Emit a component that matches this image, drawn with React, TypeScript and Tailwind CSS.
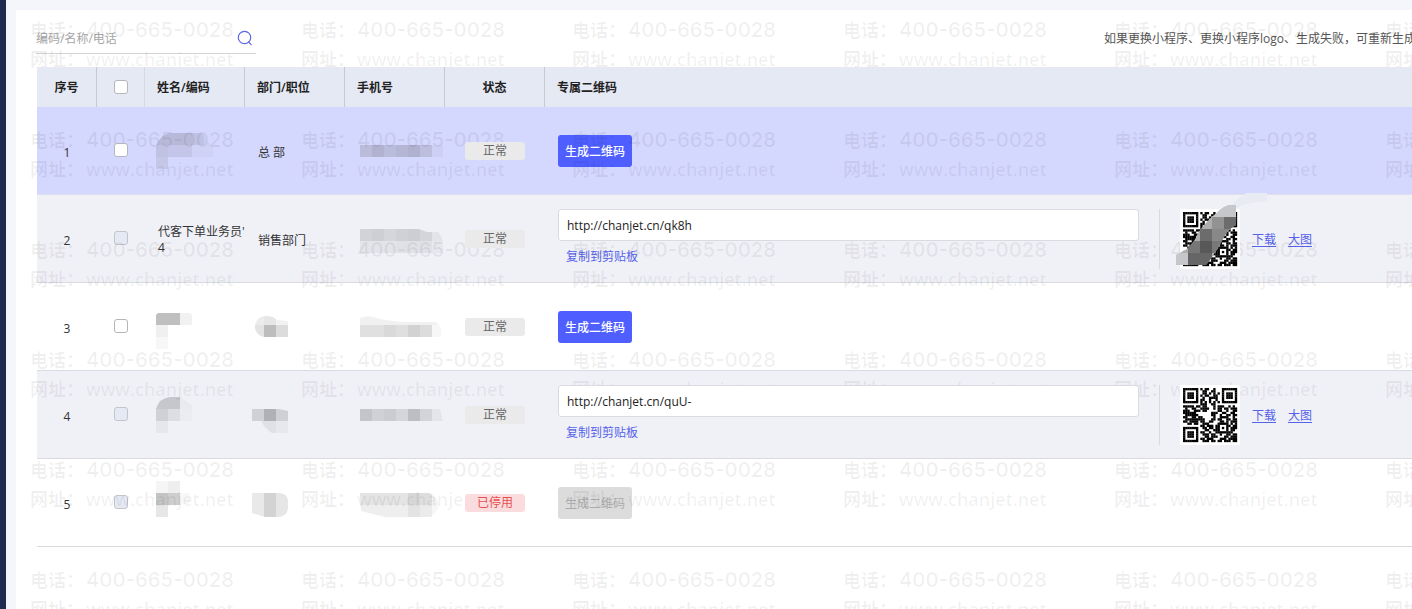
import type { ReactNode } from "react";

type Block = [x: number, y: number, w: number, h: number, fill: string];

type Row = {
  id: number;
  bg: string;
  line: string;
  locked?: boolean;
  name: ReactNode;
  dept: ReactNode;
  phone: ReactNode;
  active: boolean;
  url?: string;
  masked?: boolean;
};

// Pixelated cover for private data, drawn in the cell's own coordinates
function Mosaic({ id, shape, blocks }: { id: string; shape: string; blocks: Block[] }) {
  return (
    <svg width="100" height="87" viewBox="0 0 100 87" className="block" aria-hidden="true">
      <clipPath id={id}>
        <path d={shape} />
      </clipPath>
      <g clipPath={`url(#${id})`} shapeRendering="crispEdges">
        {blocks.map(([x, y, w, h, fill]) => (
          <rect key={`${x}-${y}`} x={x} y={y} width={w} height={h} fill={fill} />
        ))}
      </g>
    </svg>
  );
}

const rows: Row[] = [
  {
    id: 1,
    bg: "bg-[#d4d7fe]",
    line: "border-[#dddfee]",
    name: (
      <Mosaic
        id="n1"
        shape="M11 62V40Q15 27 26 26H56Q61 28 62 34L68 40V50H23V62Z"
        blocks={[
          [11, 26, 36, 12, "#b7b9d9"],
          [47, 26, 12, 12, "#c0c2e4"],
          [59, 26, 12, 12, "#cdd0f5"],
          [11, 38, 12, 12, "#c0c2e3"],
          [23, 38, 24, 12, "#c4c6e9"],
          [47, 38, 21, 12, "#cfd1f7"],
          [11, 50, 12, 12, "#c5c7e9"],
        ]}
      />
    ),
    dept: "总 部",
    phone: (
      <Mosaic
        id="p1"
        shape="M15 38H98V50H15Z"
        blocks={[
          [15, 38, 12, 12, "#babcd9"],
          [27, 38, 12, 12, "#b0b2cf"],
          [39, 38, 12, 12, "#babcdc"],
          [51, 38, 12, 12, "#b4b6d5"],
          [63, 38, 12, 12, "#afb1cf"],
          [75, 38, 12, 12, "#bcbede"],
          [87, 38, 11, 12, "#cdcff4"],
        ]}
      />
    ),
    active: true,
  },
  {
    id: 2,
    bg: "bg-[#f0f1f7]",
    line: "border-[#d9dadf]",
    locked: true,
    name: (
      <>
        代客下单业务员'
        <br />4
      </>
    ),
    dept: "销售部门",
    phone: (
      <Mosaic
        id="p2"
        shape="M15 34H74L82 37H93Q99 42 98 58H15Z"
        blocks={[
          [15, 34, 12, 12, "#d2d3d9"],
          [27, 34, 12, 12, "#cecfd5"],
          [39, 34, 12, 12, "#d5d6dc"],
          [51, 34, 12, 12, "#d0d1d7"],
          [63, 34, 12, 12, "#cdced4"],
          [75, 34, 12, 12, "#d4d5db"],
          [87, 34, 12, 12, "#e3e4ea"],
          [15, 46, 36, 12, "#e3e4ea"],
          [51, 46, 36, 12, "#e0e1e7"],
          [87, 46, 12, 12, "#e7e8ee"],
        ]}
      />
    ),
    active: true,
    url: "http://chanjet.cn/qk8h",
    masked: true,
  },
  {
    id: 3,
    bg: "bg-white",
    line: "border-[#d9dadf]",
    name: (
      <Mosaic
        id="n3"
        shape="M13 30H45L47 32V42H23V66H11V32Z"
        blocks={[
          [11, 30, 24, 12, "#bfbfbf"],
          [35, 30, 12, 12, "#f1f1f1"],
          [11, 42, 12, 12, "#f0f0f0"],
          [11, 54, 12, 12, "#f7f7f7"],
        ]}
      />
    ),
    dept: (
      <Mosaic
        id="d3"
        shape="M10 42Q12 33 21 33Q28 33 32 37L43 38V54H19Q11 52 10 45Z"
        blocks={[
          [7, 30, 12, 12, "#ececec"],
          [19, 30, 12, 12, "#e6e6e6"],
          [31, 30, 12, 12, "#f2f2f2"],
          [7, 42, 12, 12, "#e3e3e3"],
          [19, 42, 12, 12, "#bdbdbd"],
          [31, 42, 12, 12, "#dcdcdc"],
        ]}
      />
    ),
    phone: (
      <Mosaic
        id="p3"
        shape="M15 35Q25 31 34 36L56 39H90Q94 41 96 46V54H15Z"
        blocks={[
          [15, 30, 84, 12, "#f1f1f1"],
          [15, 42, 24, 12, "#e0e0e0"],
          [39, 42, 12, 12, "#d9d9d9"],
          [51, 42, 12, 12, "#dfdfdf"],
          [63, 42, 12, 12, "#d2d2d2"],
          [75, 42, 12, 12, "#dcdcdc"],
          [87, 42, 12, 12, "#f7f7f7"],
        ]}
      />
    ),
    active: true,
  },
  {
    id: 4,
    bg: "bg-[#f0f1f7]",
    line: "border-[#d9dadf]",
    locked: true,
    name: (
      <Mosaic
        id="n4"
        shape="M11 62V38Q14 27 25 26H35L47 34V50H23V62Z"
        blocks={[
          [11, 26, 24, 12, "#c6c7cd"],
          [35, 26, 12, 12, "#e9eaf0"],
          [11, 38, 12, 12, "#d0d1d7"],
          [23, 38, 12, 12, "#dddee4"],
          [35, 38, 12, 12, "#ebecf2"],
          [11, 50, 12, 12, "#e6e7ed"],
        ]}
      />
    ),
    dept: (
      <Mosaic
        id="d4"
        shape="M7 38H34L43 40V62H27Q20 58 16 50H7Z"
        blocks={[
          [7, 38, 12, 12, "#d0d1d7"],
          [19, 38, 12, 12, "#b0b1b7"],
          [31, 38, 12, 12, "#cfd0d6"],
          [7, 50, 24, 12, "#e0e1e7"],
          [31, 50, 12, 12, "#e7e8ee"],
        ]}
      />
    ),
    phone: (
      <Mosaic
        id="p4"
        shape="M15 38H95L98 50H15Z"
        blocks={[
          [15, 38, 12, 12, "#c4c5cb"],
          [27, 38, 12, 12, "#d0d1d7"],
          [39, 38, 12, 12, "#cbccd2"],
          [51, 38, 12, 12, "#d5d6dc"],
          [63, 38, 12, 12, "#bdbec4"],
          [75, 38, 12, 12, "#d3d4da"],
          [87, 38, 12, 12, "#e4e5eb"],
        ]}
      />
    ),
    active: true,
    url: "http://chanjet.cn/quU-",
  },
  {
    id: 5,
    bg: "bg-white",
    line: "border-[#d9dadf]",
    locked: true,
    name: (
      <Mosaic
        id="n5"
        shape="M11 22H35V34H45V44L35 46H23V58H11Z"
        blocks={[
          [11, 22, 12, 12, "#f5f5f5"],
          [23, 22, 12, 12, "#eeeeee"],
          [11, 34, 12, 12, "#c4c4c4"],
          [23, 34, 12, 12, "#cecece"],
          [35, 34, 12, 12, "#f8f8f8"],
          [11, 46, 12, 12, "#e7e7e7"],
        ]}
      />
    ),
    dept: (
      <Mosaic
        id="d5"
        shape="M7 34H35Q42 35 43 41V50Q41 58 33 58H20L7 54Z"
        blocks={[
          [7, 34, 12, 24, "#e9e9e9"],
          [19, 34, 12, 24, "#d3d3d3"],
          [31, 34, 12, 24, "#e6e6e6"],
        ]}
      />
    ),
    phone: (
      <Mosaic
        id="p5"
        shape="M15 34H84Q95 38 93 50L86 58H40L16 52Z"
        blocks={[
          [15, 34, 48, 12, "#e4e4e4"],
          [63, 34, 12, 12, "#d6d6d6"],
          [75, 34, 12, 12, "#dedede"],
          [87, 34, 12, 12, "#f3f3f3"],
          [15, 46, 48, 12, "#eeeeee"],
          [63, 46, 12, 12, "#e3e3e3"],
          [75, 46, 12, 12, "#ebebeb"],
          [87, 46, 12, 12, "#f7f7f7"],
        ]}
      />
    ),
    active: false,
  },
];

const qrModules = [
  "1111111010110010001111111",
  "1000001001100110001000001",
  "1011101001101010101011101",
  "1011101010110011001011101",
  "1011101001001111001011101",
  "1000001011001001001000001",
  "1111111010101010101111111",
  "0000000011100110000000000",
  "1111101101100010111001010",
  "0100110011110010110110111",
  "1110011101100000110010011",
  "1111110000000111001100110",
  "0111111000000110010011011",
  "1100110110000010011110010",
  "0111111111000110110011011",
  "1101111011001100011010111",
  "0011011001110000111110101",
  "0000000011011101100011011",
  "1111111001101101101010111",
  "1000001000110011100010110",
  "1011101011001001111111100",
  "1011101001110110010011011",
  "1011101000110111000110111",
  "1000001011011100011101111",
  "1111111001110110110111011",
];

function QrCode() {
  return (
    <svg
      width="60"
      height="60"
      viewBox="-1.4 -1.4 27.8 27.8"
      className="relative z-20 block bg-white"
      role="img"
      aria-label="二维码"
    >
      {qrModules.map((line, y) =>
        line
          .split("")
          .map((m, x) => (m === "1" ? <rect key={`${x}-${y}`} x={x} y={y} width="1.08" height="1.08" /> : null))
      )}
    </svg>
  );
}

function QrMask() {
  return (
    <svg
      width="100"
      height="80"
      viewBox="0 0 100 80"
      className="absolute -top-4 -left-2.5 z-20 max-w-none"
      aria-hidden="true"
    >
      <path d="M60 13Q68 6 76 0Q86 -4 97 0V8Q84 9 72 12L66 16Z" fill="#e9ebf3" />
      <clipPath id="qm">
        <path d="M6 62L17 56Q24 50 28 40Q38 26 47 20Q54 12 62 12H66V32Q58 36 54 44Q46 60 36 72H6Z" />
      </clipPath>
      <g clipPath="url(#qm)" shapeRendering="crispEdges">
        <rect width="100" height="80" fill="#aeaeae" />
        <rect x="42" y="12" width="24" height="12" fill="#c6c7ca" />
        <rect x="42" y="24" width="12" height="12" fill="#929292" />
        <rect x="54" y="24" width="12" height="12" fill="#6c6c6c" />
        <rect x="30" y="36" width="12" height="12" fill="#6c6c6c" />
        <rect x="42" y="36" width="24" height="12" fill="#888888" />
        <rect x="18" y="48" width="12" height="12" fill="#777777" />
        <rect x="30" y="48" width="12" height="12" fill="#585858" />
        <rect x="42" y="48" width="12" height="12" fill="#787878" />
        <rect x="6" y="60" width="12" height="12" fill="#c6c7ca" />
        <rect x="18" y="60" width="24" height="12" fill="#666666" />
      </g>
    </svg>
  );
}

function Checkbox({ label, locked }: { label: string; locked?: boolean }) {
  return (
    <input
      type="checkbox"
      aria-label={label}
      disabled={locked}
      className="relative z-20 mx-auto block size-3.5 appearance-none rounded-[3px] border border-[#b5b6ba] bg-white disabled:z-0 disabled:border-[#c3c5cb] disabled:bg-[#e5e9f4]"
    />
  );
}

function Watermark() {
  return (
    <div
      className="pointer-events-none absolute inset-0 z-10 flex flex-col gap-[52px] overflow-hidden pt-4 pl-[30px] text-lg leading-[29px] font-semibold text-black/6 select-none"
      aria-hidden="true"
    >
      {[0, 1, 2, 3, 4, 5].map((r) => (
        <div key={r} className="flex shrink-0">
          {[0, 1, 2, 3, 4, 5].map((c) => (
            <div key={c} className="w-[271px] shrink-0 whitespace-nowrap">
              <p className="flex">
                <span className="w-14">电话：</span>
                <span className="font-['Inter',sans-serif] text-xl leading-[29px]">400-665-0028</span>
              </p>
              <p className="flex">
                <span className="w-14">网址：</span>
                <span>www.chanjet.net</span>
              </p>
            </div>
          ))}
        </div>
      ))}
    </div>
  );
}

function CodeCell({ row }: { row: Row }) {
  if (!row.url) {
    return (
      <button
        type="button"
        disabled={!row.active}
        className="block h-8 w-[74px] rounded-[3px] bg-[#4f5fff] pt-0.5 text-xs font-medium text-white disabled:bg-[#dcdcdc] disabled:font-normal disabled:text-[#aaaaaa]"
      >
        生成二维码
      </button>
    );
  }
  return (
    <div className="flex items-center pr-[100px]">
      <div className="h-[60px] flex-1">
        <input
          type="text"
          readOnly
          aria-label="二维码链接"
          value={row.url}
          className="relative z-20 block h-8 w-full rounded-[3px] border border-[#d9dbe1] bg-white px-2 pt-0.5 text-xs text-[#222222] outline-none"
        />
        <button type="button" className="ml-2 block h-8 text-xs text-[#5562ea]">
          复制到剪贴板
        </button>
      </div>
      <div className="ml-5 h-[60px] w-px bg-[#d9dae0]" />
      <div className="relative ml-5">
        <QrCode />
        {row.masked && <QrMask />}
      </div>
      <div className="ml-3 flex gap-3 pt-0.5 text-xs text-[#5562ea] underline underline-offset-2">
        <a href="#download">下载</a>
        <a href="#preview">大图</a>
      </div>
    </div>
  );
}

export default function App() {
  return (
    <div className="relative flex min-h-screen overflow-hidden bg-[#f5f6fb] font-['Open_Sans','Noto_Sans_CJK_SC',sans-serif] text-xs text-[#333333]">
      <div className="w-1.5 shrink-0 bg-[#1d2b50]" />
      <main className="mt-2.5 ml-2.5 min-w-0 flex-1 bg-white pt-3 pl-5">
        <div className="flex items-center justify-between pb-[13px]">
          <div className="flex h-8 w-[220px] shrink-0 items-center border-b border-[#d3d4d8]">
            <input
              type="text"
              aria-label="编码/名称/电话"
              placeholder="编码/名称/电话"
              className="min-w-0 flex-1 bg-transparent pt-0.5 text-xs outline-none placeholder:text-[#a6a6a6]"
            />
            <button type="button" aria-label="搜索" className="mr-[3px]">
              <svg
                width="16"
                height="16"
                viewBox="0 0 16 16"
                fill="none"
                stroke="#5b66e3"
                strokeWidth="1.2"
                strokeLinecap="round"
              >
                <circle cx="7.5" cy="7.5" r="6.2" />
                <path d="M11.5 11.8L14.2 14.6" />
              </svg>
            </button>
          </div>
          <p className="-mr-1 shrink-0 pt-0.5 whitespace-nowrap text-[#555555]">
            如果更换小程序、更换小程序logo、生成失败，可重新生成
          </p>
        </div>

        <div className="pl-px">
          <table className="w-full table-fixed border-separate border-spacing-0">
            <colgroup>
              <col className="w-[60px]" />
              <col className="w-12" />
              <col className="w-[100px]" />
              <col className="w-[100px]" />
              <col className="w-[100px]" />
              <col className="w-[100px]" />
              <col />
            </colgroup>
            <thead>
              <tr className="relative z-20 h-10 bg-[#e5e9f4] text-left text-[#222222] *:pt-0.5 *:font-semibold">
                <th className="border-r border-[#c6c9d1] text-center">序号</th>
                <th className="border-r border-[#d6d9e1]">
                  <div className="pb-0.5">
                    <Checkbox label="全选" />
                  </div>
                </th>
                <th className="border-r border-[#c6c9d1] pl-3">姓名/编码</th>
                <th className="border-r border-[#c6c9d1] pl-3">部门/职位</th>
                <th className="border-r border-[#c6c9d1] pl-3">手机号</th>
                <th className="border-r border-[#c6c9d1] text-center">状态</th>
                <th className="pl-3">专属二维码</th>
              </tr>
            </thead>
            <tbody>
              {rows.map((row) => (
                <tr key={row.id} className={`h-[88px] ${row.bg} *:border-b *:p-0 ${row.line}`}>
                  <td className="border-inherit text-center">
                    <div className="pt-1">{row.id}</div>
                  </td>
                  <td className="border-inherit">
                    <div className="pb-0.5">
                      <Checkbox label={`选择第${row.id}行`} locked={row.locked} />
                    </div>
                  </td>
                  <td className="border-inherit">
                    {row.id === 2 ? (
                      <div className="pt-0.5 pl-[13px] leading-4 whitespace-nowrap">{row.name}</div>
                    ) : (
                      row.name
                    )}
                  </td>
                  <td className="border-inherit">
                    {typeof row.dept === "string" ? <div className="pt-1 pl-[13px]">{row.dept}</div> : row.dept}
                  </td>
                  <td className="border-inherit">{row.phone}</td>
                  <td className="border-inherit">
                    <span
                      className={`relative z-20 mx-auto block h-[18px] w-[60px] rounded-[3px] text-center leading-[18px] ${
                        row.active ? "bg-[#eaeaea] text-[#666666]" : "bg-[#fadcde] text-[#e84f4f]"
                      }`}
                    >
                      {row.active ? "正常" : "已停用"}
                    </span>
                  </td>
                  <td className="border-inherit">
                    <div className="pl-[13px]">
                      <CodeCell row={row} />
                    </div>
                  </td>
                </tr>
              ))}
            </tbody>
          </table>
        </div>
      </main>
      <Watermark />
    </div>
  );
}
